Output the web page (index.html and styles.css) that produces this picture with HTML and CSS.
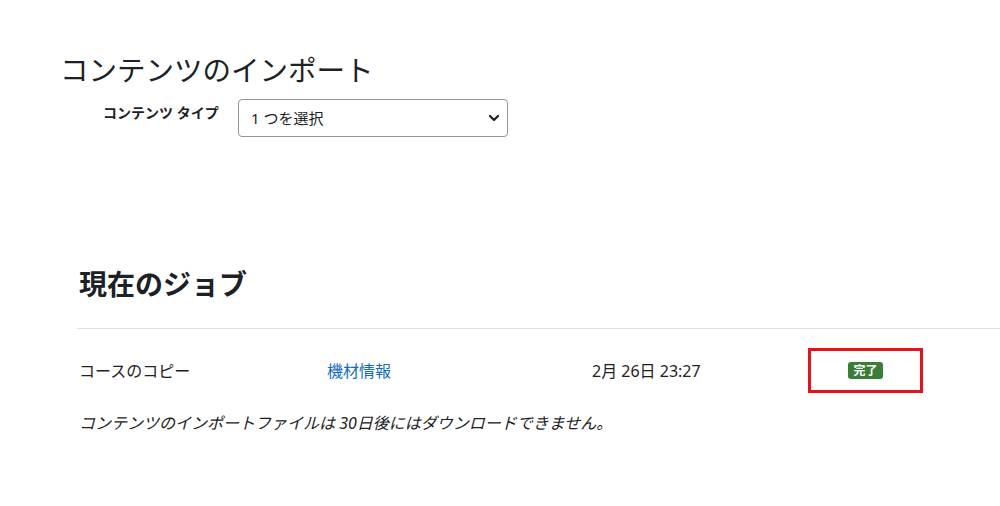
FILE: index.html
```html
<!DOCTYPE html>
<html lang="ja">

<head>
    <meta charset="UTF-8">
    <meta name="viewport" content="width=device-width, initial-scale=1.0">
    <title>コンテンツのインポート</title>

    <link rel="stylesheet" href="styles.css">
</head>

<body>

    <div class="page">
        <h1>コンテンツのインポート</h1>

        <div class="form-row">
            <label class="form-label" for="tipo">コンテンツ タイプ</label>
            <select id="tipo" class="form-select">
                <option>1 つを選択</option>
            </select>
        </div>

        <div class="jobs">
            <h2>現在のジョブ</h2>

            <div class="job-row">
                <div class="cell">コースのコピー</div>
                <div class="cell"><a href="#">機材情報</a></div>
                <div class="cell">2月 26日 23:27</div>
                <div class="cell status">
                    <span class="badge">完了</span>
                </div>
            </div>

            <p class="note">コンテンツのインポートファイルは 30日後にはダウンロードできません。</p>
        </div>
    </div>

</body>

</html>
```

FILE: styles.css
```css
* {
    box-sizing: border-box;
}

html,
body {
    margin: 0;
    height: 100%;
    overflow: hidden;
}

body {
    font-family: 'Noto Sans', 'Noto Sans CJK JP', sans-serif;
    font-size: 16px;
    color: #1d2125;
    background: #fff;
}

.page {
    padding: 52px 0 0 60px;
}

h1 {
    margin: 0;
    font-size: 28.5px;
    font-weight: 400;
    line-height: 36px;
}

.form-row {
    display: flex;
    align-items: flex-start;
    margin-top: 11px;
}

.form-label {
    width: 178px;
    padding: 3px 0 0 43px;
    font-size: 14px;
    font-weight: 700;
    line-height: 21px;
}

.form-select {
    appearance: none;
    -webkit-appearance: none;
    width: 270px;
    height: 38px;
    padding: 0 30px 0 12px;
    font-family: inherit;
    font-size: 15px;
    color: #1d2125;
    border: 1px solid #8f959e;
    border-radius: 4px;
    background: #fff url("data:image/svg+xml;utf8,<svg xmlns='http://www.w3.org/2000/svg' width='12' height='8' viewBox='0 0 12 8'><path d='M2 2l4 4 4-4' fill='none' stroke='%231d2125' stroke-width='2.2' stroke-linecap='round' stroke-linejoin='round'/></svg>") no-repeat right 7px center;
}

.jobs {
    margin: 130px 0 0 17px;
}

h2 {
    margin: 0;
    padding: 0 0 27px 2px;
    font-size: 28px;
    font-weight: 700;
    line-height: 34px;
    border-bottom: 1px solid #dee2e6;
}

.job-row {
    display: grid;
    grid-template-columns: 248px 265px 218px 115px;
    padding-top: 19px;
}

.cell {
    display: flex;
    align-items: center;
    padding-left: 2px;
    line-height: 22px;
}

.cell a {
    color: #0f6cbf;
    text-decoration: none;
}

.status {
    height: 45px;
    padding: 0;
    justify-content: center;
    border: 3px solid #e3121b;
}

.badge {
    display: inline-block;
    padding: 0 5px;
    font-size: 12px;
    font-weight: 700;
    line-height: 17px;
    color: #fff;
    background: #3a7d36;
    border-radius: 3px;
}

.note {
    margin: 19px 0 0 2px;
    font-style: italic;
    line-height: 22px;
}
```
